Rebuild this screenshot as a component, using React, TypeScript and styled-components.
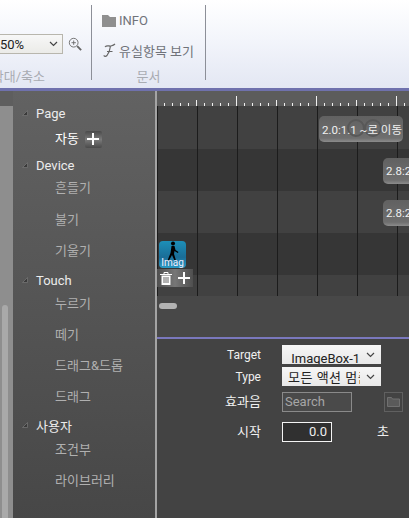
import React from 'react';
import styled, { createGlobalStyle } from 'styled-components';

const FONT = `Roboto, "Noto Sans CJK KR", sans-serif`;

const Global = createGlobalStyle`
  html, body { margin: 0; padding: 0; background: #424242; }
  body { font-family: ${FONT}; }
`;

const Page = styled.div`
  width: 409px;
  height: 518px;
  overflow: hidden;
  display: flex;
  flex-direction: column;
`;

const Ribbon = styled.div`
  flex: 0 0 91px;
  box-sizing: border-box;
  display: flex;
  padding-top: 5px;
  background: linear-gradient(#ffffff 0%, #f3f5fb 45%, #e3e7f3 100%);
  border-bottom: 3px solid #6f71ad;
`;

const Group = styled.div<{ $width: number }>`
  box-sizing: border-box;
  width: ${(p) => p.$width}px;
  height: 75px;
  border-right: 1px solid #8c8f98;
  display: flex;
  flex-direction: column;
`;

const GroupBody = styled.div`
  flex: 1;
  min-height: 0;
`;

const GroupLabel = styled.div<{ $inset?: number }>`
  height: 23px;
  margin-bottom: -8px;
  line-height: 23px;
  font-size: 13px;
  color: #a9acb2;
  display: flex;
  justify-content: ${(p) => (p.$inset ? 'flex-end' : 'center')};
  padding-right: ${(p) => p.$inset ?? 0}px;
  white-space: nowrap;
`;

const ZoomRow = styled.div`
  display: flex;
  align-items: center;
  padding-top: 29px;
  margin-left: -8px;
  gap: 5px;
`;

const ZoomSelect = styled.div`
  box-sizing: border-box;
  width: 71px;
  height: 20px;
  padding: 0 4px 0 7px;
  display: flex;
  align-items: center;
  justify-content: space-between;
  font-size: 13px;
  color: #222;
  background: linear-gradient(#f7f7f7, #ebebe8);
  border: 1px solid #b8b6ad;
`;

const DocBody = styled(GroupBody)`
  padding: 5px 0 0 10px;
  display: flex;
  flex-direction: column;
  gap: 9px;
`;

const DocRow = styled.div`
  display: flex;
  align-items: center;
  gap: 3px;
  height: 21px;
  font-size: 13px;
  color: #70737a;
  white-space: nowrap;
`;

const Workspace = styled.div`
  flex: 1;
  min-height: 0;
  display: flex;
`;

const Gutter = styled.div`
  flex: 0 0 13px;
  display: flex;
  flex-direction: column;
`;

const GutterTop = styled.div`
  flex: 0 0 15px;
  background: #5e5e5e;
`;

const GutterTrack = styled.div`
  flex: 1;
  background: #8e8e8e;
  padding: 199px 5px 0 2px;
`;

const GutterThumb = styled.div`
  height: 100%;
  background: #a9a9a9;
  border-radius: 3px 3px 0 0;
`;

const Sidebar = styled.div`
  box-sizing: border-box;
  flex: 0 0 144px;
  padding: 12px 0 0 9px;
  background: linear-gradient(#626262, #474747);
  border-right: 2px solid #a4a4a4;
  color: #eeeeee;
`;

const Heading = styled.div<{ $gap?: number }>`
  display: flex;
  align-items: center;
  gap: 8px;
  height: 20px;
  margin-top: ${(p) => p.$gap ?? 0}px;
  font-size: 13px;
  color: #ececec;
`;

const Item = styled.div<{ $active?: boolean; $gap?: number }>`
  display: flex;
  align-items: center;
  gap: 6px;
  height: 20px;
  margin-top: ${(p) => p.$gap ?? 11}px;
  padding-left: 33px;
  font-size: 13px;
  color: ${(p) => (p.$active ? '#ffffff' : '#b0b0b0')};
`;

const AddButton = styled.span`
  width: 17px;
  height: 17px;
  margin-top: 4px;
  display: flex;
  align-items: center;
  justify-content: center;
  background: linear-gradient(#4a4a4a, #7a7a7a 50%, #4a4a4a);
  border-radius: 2px;
`;

const Main = styled.div`
  flex: 1;
  min-width: 0;
  display: flex;
  flex-direction: column;
`;

const Timeline = styled.div`
  flex: 0 0 246px;
  display: flex;
  flex-direction: column;
  background: #484848;
`;

const Ruler = styled.svg`
  display: block;
  flex: 0 0 15px;
  background: #5c5c5c;
`;

const Tracks = styled.div`
  position: relative;
  flex: 0 0 190px;
  display: flex;
  flex-direction: column;
`;

const Band = styled.div<{ $dark?: boolean; $height: number }>`
  flex: 0 0 ${(p) => p.$height}px;
  background: ${(p) => (p.$dark ? '#363636' : '#414141')};
`;

const GridLines = styled.div`
  position: absolute;
  inset: 0;
  background: repeating-linear-gradient(
    90deg,
    #1c1c1c 0 1px,
    transparent 1px 40px
  );
`;

const Clip = styled.div<{ $left: number; $top: number; $width: number }>`
  position: absolute;
  left: ${(p) => p.$left}px;
  top: ${(p) => p.$top}px;
  width: ${(p) => p.$width}px;
  height: 26px;
  box-sizing: border-box;
  padding-left: 3px;
  display: flex;
  align-items: center;
  border-radius: 5px;
  background: linear-gradient(#616161, #6f6f6f 85%, #8c8c8c);
  color: #f0f0f0;
  font-size: 11.5px;
  white-space: nowrap;
  overflow: hidden;
`;

const ClipOrnament = styled.svg`
  position: absolute;
  left: 28px;
  top: 0;
`;

const ClipText = styled.span`
  position: relative;
`;

const ImageNode = styled.div`
  position: absolute;
  left: 2px;
  top: 135px;
  width: 27px;
  height: 27px;
  box-sizing: border-box;
  border-radius: 4px;
  background: linear-gradient(#1d8fb8, #1a6d97 60%, #2a9ac4);
  overflow: hidden;
  color: #eef;
  font-size: 10px;
  line-height: 10px;
  text-align: center;
`;

const Runner = styled.svg`
  display: block;
  margin: 0 auto -3px;
`;

const NodeActions = styled.div`
  position: absolute;
  left: 0;
  top: 163px;
  width: 36px;
  height: 18px;
  display: flex;
  background: linear-gradient(90deg, #4f4f4f, #777 50%, #4f4f4f);
`;

const NodeAction = styled.span`
  flex: 1;
  display: flex;
  align-items: center;
  justify-content: center;
`;

const ScrollArea = styled.div`
  flex: 1;
  padding: 7px 0 0 2px;
`;

const ScrollThumb = styled.div`
  width: 18px;
  height: 6px;
  border-radius: 3px;
  background: #b3b3b3;
`;

const Divider = styled.div`
  flex: 0 0 2px;
  background: #7a78bd;
`;

const Form = styled.div`
  flex: 1;
  display: grid;
  grid-template-columns: 104px 99px 1fr;
  grid-template-rows: 22px 25px 30px 20px;
  column-gap: 21px;
  padding-top: 6px;
  background: #434343;
  align-items: start;
`;

const Label = styled.div<{ $tall?: boolean; $latin?: boolean }>`
  height: ${(p) => (p.$tall ? 20 : 21)}px;
  line-height: ${(p) => (p.$tall ? 20 : 21)}px;
  text-align: right;
  font-size: ${(p) => (p.$latin ? 12 : 13)}px;
  color: #f0f0f0;
`;

const Select = styled.div`
  box-sizing: border-box;
  height: 19px;
  display: flex;
  align-items: center;
  justify-content: space-between;
  padding: 0 6px;
  font-size: 13px;
  color: #222;
  background: linear-gradient(#f6f6f6, #e8e8e8);
  white-space: nowrap;
  overflow: hidden;
`;

const SelectText = styled.span<{ $width: number; $drop?: number; $spread?: number }>`
  display: block;
  width: ${(p) => p.$width}px;
  margin-top: ${(p) => p.$drop ?? 0}px;
  letter-spacing: ${(p) => p.$spread ?? 0}px;
  overflow: hidden;
`;

const SearchBox = styled.div`
  box-sizing: border-box;
  width: 70px;
  height: 20px;
  line-height: 18px;
  padding-left: 2px;
  font-size: 13px;
  color: #a6a6a6;
  background: #4a4a4a;
  border: 1px solid #8a8a8a;
`;

const FolderButton = styled.div`
  box-sizing: border-box;
  width: 19px;
  height: 20px;
  margin-left: -18px;
  display: flex;
  align-items: center;
  justify-content: center;
  border: 1px solid #606060;
`;

const TimeBox = styled.div`
  box-sizing: border-box;
  width: 50px;
  height: 20px;
  line-height: 18px;
  padding-right: 4px;
  text-align: right;
  font-size: 13px;
  color: #eeeeee;
  background: #303030;
  border: 1px solid #f4f4f4;
`;

const Unit = styled.div`
  height: 20px;
  line-height: 20px;
  margin-left: -25px;
  font-size: 13px;
  color: #eeeeee;
`;

const Chevron = () => (
  <svg width="9" height="6" viewBox="0 0 9 6">
    <path d="M1 1l3.500 3.500L8 1" fill="none" stroke="#444" strokeWidth="1.200" />
  </svg>
);

const Triangle = () => (
  <svg width="6" height="6" viewBox="0 0 6 6">
    <path d="M5.500.5v5H.5z" fill="#3a3a3a" stroke="#747474" strokeWidth=".8" />
  </svg>
);

const Plus = ({ size = 12 }: { size?: number }) => (
  <svg width={size} height={size} viewBox="0 0 12 12">
    <path d="M6 0v12M0 6h12" stroke="#fff" strokeWidth="2" />
  </svg>
);

const ticks = Array.from({ length: 32 }, (_, i) => i);

const TimeRuler = () => (
  <Ruler width="252" height="15" viewBox="0 0 252 15">
    {ticks.map((i) => {
      const x = 7.5 + i * 8;
      const h = i % 10 === 9 ? 10 : i % 5 === 4 ? 6 : 3;
      return <path key={i} d={`M${x} 15v-${h}`} stroke="#f0f0f0" strokeWidth="1" />;
    })}
  </Ruler>
);

const App = () => {
  return (
    <Page>
      <Global />
      <Ribbon>
        <Group $width={92}>
          <GroupBody>
            <ZoomRow>
              <ZoomSelect>
                50%
                <Chevron />
              </ZoomSelect>
              <svg width="14" height="14" viewBox="0 0 16 16">
                <circle cx="6.500" cy="6.500" r="5" fill="none" stroke="#666" />
                <path d="M4 6.500h5M6.500 4v5" stroke="#666" />
                <path d="M10.500 10.500l4.500 4.500" stroke="#666" strokeWidth="2.200" />
              </svg>
            </ZoomRow>
          </GroupBody>
          <GroupLabel $inset={46}>확대/축소</GroupLabel>
        </Group>
        <Group $width={114}>
          <DocBody>
            <DocRow>
              <svg width="14" height="12" viewBox="0 0 14 12">
                <path d="M0 0h6l2 2h6v10H0z" fill="#8f8f8f" />
              </svg>
              INFO
            </DocRow>
            <DocRow>
              <svg width="13" height="15" viewBox="0 0 13 15" style={{ margin: '0 0 0 1px' }}>
                <path
                  d="M2 4c2-2.500 4-.5 6-1s3-1 4-2M7.500 3C7 7 6 10 4 12.500c-1.200 1.200-3 1-3-.3M4 8.500h5.500"
                  fill="none"
                  stroke="#666"
                  strokeWidth="1.200"
                />
              </svg>
              유실항목 보기
            </DocRow>
          </DocBody>
          <GroupLabel>문서</GroupLabel>
        </Group>
      </Ribbon>
      <Workspace>
        <Gutter>
          <GutterTop />
          <GutterTrack>
            <GutterThumb />
          </GutterTrack>
        </Gutter>
        <Sidebar>
          <Heading>
            <Triangle />
            Page
          </Heading>
          <Item $active $gap={4}>
            자동
            <AddButton>
              <Plus />
            </AddButton>
          </Item>
          <Heading $gap={8}>
            <Triangle />
            Device
          </Heading>
          <Item $gap={1}>흔들기</Item>
          <Item $gap={12}>불기</Item>
          <Item>기울기</Item>
          <Heading $gap={11}>
            <Triangle />
            Touch
          </Heading>
          <Item $gap={2}>누르기</Item>
          <Item>떼기</Item>
          <Item>드래그&드롭</Item>
          <Item>드래그</Item>
          <Heading $gap={10}>
            <Triangle />
            사용자
          </Heading>
          <Item $gap={3}>조건부</Item>
          <Item>라이브러리</Item>
        </Sidebar>
        <Main>
          <Timeline>
            <TimeRuler />
            <Tracks>
              <Band $height={43} />
              <Band $height={42} $dark />
              <Band $height={42} />
              <Band $height={42} $dark />
              <Band $height={21} />
              <GridLines />
              <Clip $left={162} $top={10} $width={84}>
                <ClipOrnament width="36" height="24" viewBox="0 0 36 24">
                  <circle cx="9" cy="12" r="8" fill="none" stroke="#585858" strokeWidth="2" />
                  <circle cx="26" cy="12" r="8" fill="none" stroke="#585858" strokeWidth="2" />
                </ClipOrnament>
                <ClipText>2.0:1.1 ~로 이동</ClipText>
              </Clip>
              <Clip $left={226} $top={52} $width={30}>
                2.8:2
              </Clip>
              <Clip $left={226} $top={94} $width={30}>
                2.8:2
              </Clip>
              <ImageNode>
                <Runner width="15" height="20" viewBox="0 0 15 20">
                  <circle cx="8" cy="2.500" r="2" fill="#000" />
                  <path d="M6.500 5h3l1 4 3 2-.7 1-3.300-2-.5 3 2 6.500h-1.500L7 14l-3 5.500H2.500L5.500 12z" fill="#000" />
                </Runner>
                Imag
              </ImageNode>
              <NodeActions>
                <NodeAction>
                  <svg width="12" height="13" viewBox="0 0 12 13">
                    <path d="M0 2.500h12M4 2V.5h4V2" fill="none" stroke="#fff" />
                    <path d="M1.500 3.500h9V13h-9z" fill="#fff" />
                    <path d="M4 5v6M6 5v6M8 5v6" stroke="#666" />
                  </svg>
                </NodeAction>
                <NodeAction>
                  <Plus />
                </NodeAction>
              </NodeActions>
            </Tracks>
            <ScrollArea>
              <ScrollThumb />
            </ScrollArea>
          </Timeline>
          <Divider />
          <Form>
            <Label $latin>Target</Label>
            <Select>
              <SelectText $width={74} $drop={7}>&nbsp;ImageBox-1</SelectText>
              <Chevron />
            </Select>
            <div />
            <Label $latin>Type</Label>
            <Select>
              <SelectText $width={72} $spread={0.5}>모든 액션 멈춤</SelectText>
              <Chevron />
            </Select>
            <div />
            <Label $tall>효과음</Label>
            <SearchBox>Search</SearchBox>
            <FolderButton>
              <svg width="13" height="10" viewBox="0 0 13 10">
                <path d="M.5.500h4l1 1.500h7v7.500H.5z" fill="#5a5a5a" stroke="#707070" />
              </svg>
            </FolderButton>
            <Label $tall>시작</Label>
            <TimeBox>0.0</TimeBox>
            <Unit>초</Unit>
          </Form>
        </Main>
      </Workspace>
    </Page>
  );
};

export default App;
